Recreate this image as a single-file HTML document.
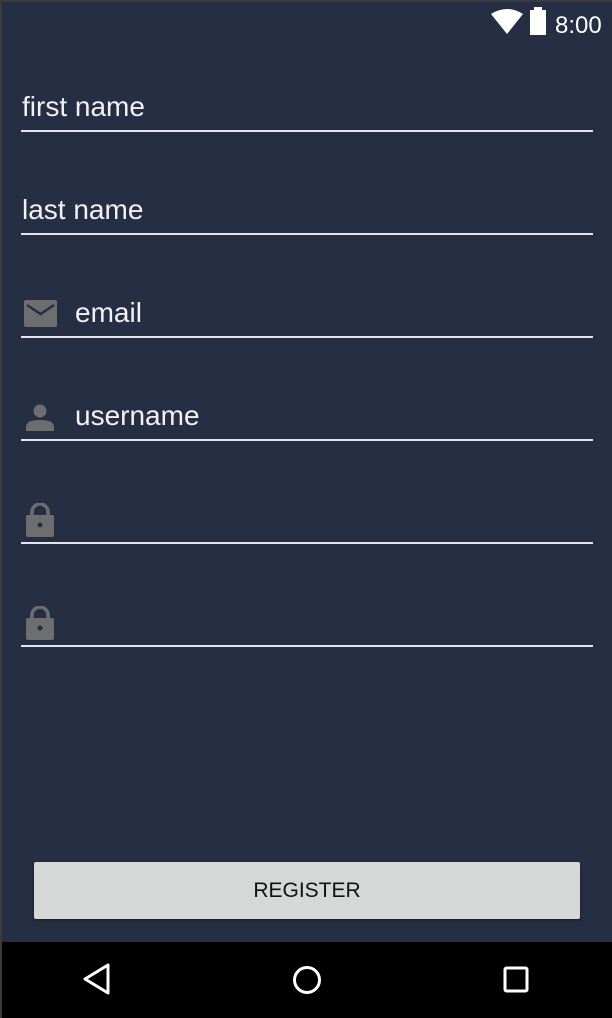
<!DOCTYPE html>
<html><head><style>
body{margin:0;width:612px;height:1018px;overflow:hidden;background:#3a3b3d;font-family:"Liberation Sans",sans-serif;}
.app{position:absolute;left:2px;top:2px;width:610px;height:940px;background:#252e42;}
.line{position:absolute;left:21px;width:572px;height:2px;background:#e6e6ea;}
.t{position:absolute;color:#f2f2f4;font-size:28px;line-height:30px;}
.ic{position:absolute;}
.nav{position:absolute;left:2px;top:942px;width:610px;height:76px;background:#000;}
.btn{position:absolute;left:34px;top:862px;width:546px;height:57px;background:#d6d7d7;border-radius:2px;box-shadow:0 1px 2px rgba(0,0,0,.5);color:#111;font-size:21px;text-align:center;line-height:57px;}
</style></head><body>
<div class="app"></div>
<svg class="ic" style="left:490px;top:8px" width="34" height="28" viewBox="0 0 34 28"><path d="M1 6 Q17 -4 33 6 L17 26 Z" fill="#fff"/></svg>
<div style="position:absolute;left:530px;top:10px;width:16px;height:25px;background:#fff;"></div>
<div style="position:absolute;left:534px;top:7px;width:8px;height:4px;background:#fff;"></div>
<div class="t" style="left:555px;top:11px;font-size:24px;color:#fff">8:00</div>

<div class="t" style="left:22px;top:92px">first name</div>
<div class="line" style="top:130px"></div>
<div class="t" style="left:22px;top:195px">last name</div>
<div class="line" style="top:233px"></div>

<svg class="ic" style="left:24px;top:300px" width="33" height="27" viewBox="0 0 33 27"><rect width="33" height="27" rx="2" fill="#6d6e70"/><path d="M3 5 L16.5 14 L30 5" stroke="#252e42" stroke-width="2.5" fill="none"/></svg>
<div class="t" style="left:75px;top:298px">email</div>
<div class="line" style="top:336px"></div>

<svg class="ic" style="left:26px;top:403px" width="28" height="28" viewBox="0 0 28 28"><circle cx="14" cy="8" r="6.5" fill="#6d6e70"/><path d="M0 28 L0 24 Q0 17 14 17 Q28 17 28 24 L28 28 Z" fill="#6d6e70"/></svg>
<div class="t" style="left:75px;top:401px">username</div>
<div class="line" style="top:439px"></div>

<svg class="ic" style="left:26px;top:503px" width="28" height="34" viewBox="0 0 28 34"><path d="M6 13 V9 A8 8 0 0 1 22 9 V13" stroke="#6d6e70" stroke-width="3.5" fill="none"/><rect y="12" width="28" height="22" rx="2" fill="#6d6e70"/><circle cx="14" cy="22" r="2.5" fill="#252e42"/></svg>
<div class="line" style="top:542px"></div>
<svg class="ic" style="left:26px;top:606px" width="28" height="34" viewBox="0 0 28 34"><path d="M6 13 V9 A8 8 0 0 1 22 9 V13" stroke="#6d6e70" stroke-width="3.5" fill="none"/><rect y="12" width="28" height="22" rx="2" fill="#6d6e70"/><circle cx="14" cy="22" r="2.5" fill="#252e42"/></svg>
<div class="line" style="top:645px"></div>

<div class="btn">REGISTER</div>
<div class="nav"></div>
<svg class="ic" style="left:70px;top:955px" width="480" height="50" viewBox="0 0 480 50"><path d="M38 10 L38 38 L15 24 Z" stroke="#fff" stroke-width="3" fill="none" stroke-linejoin="round"/><circle cx="237" cy="25" r="12.5" stroke="#fff" stroke-width="3" fill="none"/><rect x="435" y="13" width="22" height="23" rx="1.5" stroke="#fff" stroke-width="3" fill="none"/></svg>
</body></html>
